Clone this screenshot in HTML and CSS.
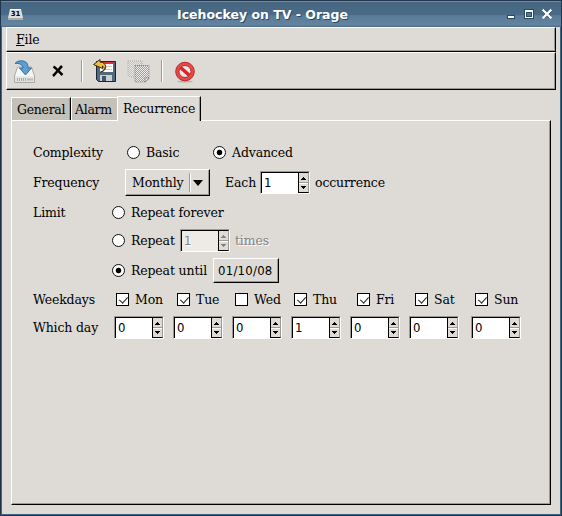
FILE: index.html
```html
<!DOCTYPE html>
<html lang="en">
<head>
<meta charset="utf-8">
<title>Icehockey on TV - Orage</title>
<link rel="stylesheet" href="styles.css">
</head>
<body>
<div class="window">
  <header class="titlebar">
    <svg class="app-icon" width="16" height="14" viewBox="0 0 16 14"><path d="M2 1h11l2 9v2H0v-2z" fill="#dededc"/><path d="M0 10h15v2H0z" fill="#aaa"/><path d="M2 1h11v1H2z" fill="#fff"/><text x="7.5" y="8" text-anchor="middle" class="icon-date">31</text></svg>
    <h1>Icehockey on TV - Orage</h1>
    <svg class="controls" width="48" height="14" viewBox="0 0 48 14" shape-rendering="crispEdges"><path d="M1 10h8v4H1z" fill="#294960"/><path d="M2 11h6v2H2z" fill="#fff"/><path d="M18 4h10v10H18z" fill="#294960"/><path d="M19 5h8v8h-8z" fill="#fff"/><path d="M20 7h6v5h-6z" fill="#294960"/><path d="M21 8h4v3h-4z" fill="#577994"/><path d="M37.500 5.500l7 7m0-7l-7 7" stroke="#294960" stroke-width="4"/><path d="M37.500 5.500l7 7m0-7l-7 7" stroke="#fff" stroke-width="2.300" shape-rendering="auto" stroke-linecap="square"/></svg>
  </header>
  <nav class="menubar"><span><u>F</u>ile</span></nav>
  <div class="toolbar">
    <svg class="tool save" width="24" height="24" viewBox="0 0 24 24"><path d="M4.500 7h14l3 9v6.500h-20V16z" fill="#f6f6f5" stroke="#a9a9a7"/><path d="M2 16.500h19v5.500H2z" fill="#e3e3e1"/><path d="M4.500 18v3m2-3v3m2-3v3m2-3v3m2-3v3" stroke="#aaa"/><path d="M14 19.500h6" stroke="#bbb" stroke-width="2"/><path d="M2 3.500C4 1 7 .500 10 1c4 .700 5 3 5 7h3.500L12.500 15 6.500 8h3.500c0-3-3-5-8-4.500z" fill="#5c9fd0" stroke="#326ea0"/></svg>
    <svg class="tool close" width="12" height="12" viewBox="0 0 12 12"><path d="M1.500 1.500c3 2 5 5 9 8.500M10 1C7 4 5 7 1 11" fill="none" stroke="#000" stroke-width="2.500"/></svg>
    <i class="sep one"></i>
    <svg class="tool revert" width="24" height="24" viewBox="0 0 24 24"><path d="M3.500 2.500h19v20h-17l-2-2z" fill="#54687b" stroke="#162635"/><path d="M7 3h13v10H7z" fill="#fff"/><path d="M7 3h13v2H7z" fill="#d33"/><path d="M9 7.500h10m-10 3h10" stroke="#e3c6c6"/><path d="M7 16h12v6H7z" fill="#c8d0d8"/><path d="M9 17h4v5H9z" fill="#445566"/><path d="M7.500 13c4-1 5-4 2-6v2.500L.500 5.500 7 .500V3c7 0 8 9 .500 10z" fill="#f0bd43" stroke="#392c08"/></svg>
    <svg class="tool copy" width="24" height="24" viewBox="0 0 24 24"><defs><pattern id="stipple" width="2" height="2" patternUnits="userSpaceOnUse"><path d="M0 0h2v2H0z" fill="#eeedeb"/><path d="M0 0h1v1H0zM1 1h1v1H1z" fill="#a09f9c"/></pattern><pattern id="light" width="2" height="2" patternUnits="userSpaceOnUse"><path d="M0 0h2v2H0z" fill="#e7e5e1"/><path d="M0 0h1v1H0zM1 1h1v1H1z" fill="#c5c3be"/></pattern></defs><path d="M1 1h14v16H3l-2-2z" fill="url(#light)" stroke="#aaa" stroke-dasharray="1 1"/><path d="M8 5.500h14v13L18.500 22H8z" fill="url(#stipple)" stroke="#888" stroke-dasharray="1 1"/><path d="M18 22v-4h4z" fill="#eee" stroke="#777" stroke-width=".7"/></svg>
    <i class="sep two"></i>
    <svg class="tool stop" width="22" height="22" viewBox="0 0 22 22"><ellipse cx="11" cy="20.500" rx="8" ry="1.200" fill="#b7b4b0"/><circle cx="11" cy="10.500" r="9.300" fill="#e14b4b" stroke="#bd2424"/><circle cx="11" cy="10.500" r="6" fill="#e8e5e2" stroke="#c32727"/><path d="M6.500 6.500l9 8" stroke="#d32727" stroke-width="3.500"/></svg>
  </div>
  <div class="tabs"><span class="tab general">General</span><span class="tab alarm">Alarm</span><span class="tab active">Recurrence</span></div>
  <main class="page">
    <div class="row complexity"><span class="label">Complexity</span><i class="radio"></i><span class="basic">Basic</span><i class="radio on"></i><span>Advanced</span></div>
    <div class="row frequency"><span class="label">Frequency</span><div class="combo"><span>Monthly</span><i class="bar"></i><i class="arrow"></i></div><span class="each">Each</span><div class="spin"><b>1</b><i class="step"></i></div><span class="after">occurrence</span></div>
    <div class="row limit"><span class="label">Limit</span><i class="radio"></i><span>Repeat forever</span></div>
    <div class="row count"><span class="label"></span><i class="radio"></i><span class="repeat">Repeat</span><div class="spin off"><b>1</b><i class="step"></i></div><span class="after dim">times</span></div>
    <div class="row until"><span class="label"></span><i class="radio on"></i><span class="until-text">Repeat until</span><div class="date">01/10/08</div></div>
    <div class="row weekdays"><span class="label">Weekdays</span>
      <div class="days">
        <span class="mon"><i class="check on"></i>Mon</span><span class="tue"><i class="check on"></i>Tue</span><span class="wed"><i class="check"></i>Wed</span><span class="thu"><i class="check on"></i>Thu</span><span class="fri"><i class="check on"></i>Fri</span><span class="sat"><i class="check on"></i>Sat</span><span class="sun"><i class="check on"></i>Sun</span>
      </div></div>
    <div class="row which"><span class="label">Which day</span>
      <div class="days">
        <div class="spin"><b>0</b><i class="step"></i></div><div class="spin"><b>0</b><i class="step"></i></div><div class="spin"><b>0</b><i class="step"></i></div><div class="spin"><b>1</b><i class="step"></i></div><div class="spin"><b>0</b><i class="step"></i></div><div class="spin"><b>0</b><i class="step"></i></div><div class="spin"><b>0</b><i class="step"></i></div>
      </div></div>
  </main>
</div>
</body>
</html>
```
FILE: styles.css
```css
* { box-sizing: border-box; }
body {
  margin: 0;
  width: 562px;
  height: 516px;
  overflow: hidden;
  background: #1c2a3a;
  color: #000;
  font: 12.5px/18px "DejaVu Serif", serif;
  letter-spacing: -0.15px;
  white-space: nowrap;
}
i { display: block; flex: none; }
svg { display: block; flex: none; }
.window {
  height: 516px;
  border: 1px solid #20344c;
  background: #dedbd6;
  box-shadow: inset 1px 0 #3e6384, inset -1px 0 #3e6384, inset 0 -1px #3e6384;
}
.titlebar {
  display: flex;
  height: 26px;
  padding-left: 7px;
  border-top: 1px solid #6f8ba4;
  background: linear-gradient(#47657f, #496b88 50%, #587c9a 55%, #64839e 92%, #496985);
}
.app-icon { margin-top: 6px; }
.icon-date { font: bold 7px "DejaVu Sans"; letter-spacing: 0; }
.titlebar h1 {
  width: 174px;
  margin: 4px 0 0 153px;
  color: #fff;
  font: bold 12.5px/18px "DejaVu Sans", sans-serif;
  letter-spacing: 0;
  text-shadow: 1px 1px #2d4960;
}
.controls { margin: 3px 0 0 155px; }
.menubar, .toolbar {
  width: 550px;
  margin-left: 5px;
  border: 1px solid;
  border-color: #fff #000 #000 #fff;
  box-shadow: inset -1px -1px #9c9a96;
}
.menubar { height: 25px; padding: 3px 0 0 9px; }
.toolbar { display: flex; height: 38px; }
.tool.save { margin: 7px 0 0 6px; }
.tool.close { margin: 12px 0 0 15px; }
.sep { width: 2px; height: 22px; margin-top: 7px; border-left: 1px solid #9c9a96; border-right: 1px solid #fff; }
.sep.one { margin-left: 17px; }
.tool.revert { margin: 6px 0 0 10px; }
.tool.copy { margin: 7px 0 0 10px; }
.sep.two { margin-left: 10px; }
.tool.stop { margin: 8px 0 0 11px; }
.tabs { display: flex; align-items: flex-end; height: 30px; margin-left: 10px; }
.tab { height: 23px; padding: 3px 0 0 5px; background: #c4c1bb; border-top: 1px solid #fff; border-left: 1px solid #fff; letter-spacing: -0.3px; }
.general { width: 60px; border-right: 1px solid #000; box-shadow: inset -1px 0 #9c9a96; }
.alarm { width: 46px; padding-left: 3px; }
.tab.active {
  position: relative;
  width: 84px;
  height: 25px;
  margin-bottom: -1px;
  padding: 3px 0 0 5px;
  background: #dedbd6;
  border-right: 1px solid #000;
  box-shadow: inset -1px 0 #9c9a96;
  letter-spacing: -0.15px;
}
.page {
  width: 540px;
  height: 385px;
  margin-left: 10px;
  padding-top: 17px;
  border: 1px solid;
  border-color: #fff #000 #000 #fff;
  box-shadow: inset -1px -1px #9c9a96;
}
.row { display: flex; align-items: center; height: 30px; padding-left: 21px; }
.label { flex: none; width: 79px; }
.radio { width: 13px; height: 13px; margin: 0 6px 1px 0; border: 1px solid #111; border-radius: 50%; background: #fff; }
.radio.on { background: radial-gradient(circle, #000 2.4px, #fff 3.2px); }
.complexity .label { width: 94px; }
.basic { width: 67px; }
.frequency .label { width: 92px; }
.combo, .date { display: flex; align-items: center; margin-bottom: 1px; border: 1px solid; border-color: #fff #000 #000 #fff; box-shadow: inset -1px -1px #9c9a96; }
.combo { width: 85px; height: 27px; padding-left: 6px; }
.combo span { width: 57px; }
.bar { width: 2px; height: 19px; border-left: 1px solid #9c9a96; border-right: 1px solid #fff; }
.arrow { margin-left: 2px; border: 5px solid transparent; border-top: 6px solid #000; border-bottom: 0; }
.each { width: 35px; margin-left: 15px; }
.spin {
  display: flex;
  flex: none;
  width: 50px;
  height: 23px;
  margin-bottom: 1px;
  border: 1px solid;
  border-color: #9c9a96 #fff #fff #9c9a96;
  background: #fff;
  box-shadow: inset 1px 1px #000;
}
.spin b { width: 37px; padding: 1px 0 0 3px; font: 13px/19px "DejaVu Sans Condensed", "DejaVu Sans", sans-serif; font-stretch: condensed; }
.step {
  width: 11px;
  height: 21px;
  border: 1px solid #000;
  border-right-color: #9c9a96;
  background:
    conic-gradient(from 140deg at 50% 0, #000 80deg, transparent 0) 50% 4px / 5px 3px no-repeat,
    conic-gradient(from -40deg at 50% 100%, #000 80deg, transparent 0) 50% 13px / 5px 3px no-repeat,
    linear-gradient(#fff, #fff) 0 10px / 100% 1px no-repeat,
    linear-gradient(#9c9a96, #9c9a96) 0 9px / 100% 1px no-repeat,
    #dedbd6;
}
.spin.off { background: #eeebe7; }
.spin.off .step {
  background:
    conic-gradient(from 140deg at 50% 0, #85827e 80deg, transparent 0) 50% 4px / 5px 3px no-repeat,
    conic-gradient(from -40deg at 50% 100%, #85827e 80deg, transparent 0) 50% 13px / 5px 3px no-repeat,
    linear-gradient(#fff, #fff) 0 10px / 100% 1px no-repeat,
    linear-gradient(#9c9a96, #9c9a96) 0 9px / 100% 1px no-repeat,
    #dedbd6;
}
.off b, .dim { color: #85827e; text-shadow: 1px 1px #fff; }
.after { margin-left: 5px; }
.count { height: 26px; }
.repeat { width: 49px; }
.until { height: 34px; }
.until-text { width: 82px; }
.date { width: 66px; height: 25px; padding-left: 4px; font: 13px/18px "DejaVu Sans Condensed", "DejaVu Sans", sans-serif; font-stretch: condensed; letter-spacing: .25px; }
.weekdays { height: 24px; }
.which { height: 32px; }
.weekdays .label, .which .label { width: 81px; }
.days { display: grid; grid-template-columns: repeat(5, 59px) 62px 50px; }
.days > span { display: flex; align-items: center; }
.check { position: relative; width: 13px; height: 13px; margin: 0 6px 1px 0; border: 1px solid #000; background: #fff; }
.check.on::after { content: ""; position: absolute; left: 4px; top: 1px; width: 4px; height: 7px; border: solid #222; border-width: 0 1.5px 1.5px 0; transform: rotate(42deg); }
.mon { padding-left: 2px; }
.tue { padding-left: 4px; }
.wed { padding-left: 3px; }
.thu { padding-left: 3px; }
.fri { padding-left: 7px; }
.sat { padding-left: 6px; }
.sun { padding-left: 4px; }
```
